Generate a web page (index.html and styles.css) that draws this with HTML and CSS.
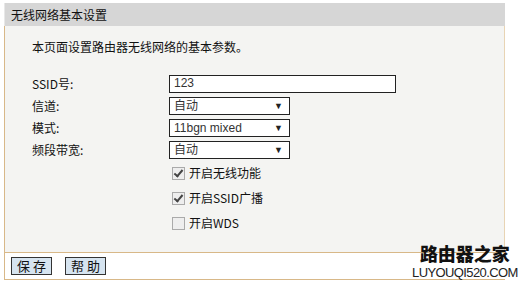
FILE: index.html
```html
<!DOCTYPE html>
<html lang="zh-CN">
<head>
<meta charset="utf-8">
<title>无线网络基本设置</title>
<link rel="stylesheet" href="styles.css">
</head>
<body>

<div class="panel">
    <div class="title">无线网络基本设置</div>

    <div class="content">
        <p class="intro">本页面设置路由器无线网络的基本参数。</p>

        <div class="rows">
            <div class="row">
                <span class="label">SSID号:</span>
                <span class="field text">123</span>
            </div>
            <div class="row">
                <span class="label">信道:</span>
                <span class="field select">自动<i>&#9660;</i></span>
            </div>
            <div class="row">
                <span class="label">模式:</span>
                <span class="field select">11bgn mixed<i>&#9660;</i></span>
            </div>
            <div class="row">
                <span class="label">频段带宽:</span>
                <span class="field select">自动<i>&#9660;</i></span>
            </div>
        </div>

        <div class="checks">
            <label class="check"><span class="box on"></span>开启无线功能</label>
            <label class="check"><span class="box on"></span>开启SSID广播</label>
            <label class="check"><span class="box"></span>开启WDS</label>
        </div>
    </div>

    <div class="foot">
        <button class="btn">保 存</button>
        <button class="btn">帮 助</button>
    </div>
</div>

<div class="mark">
    <div class="mark-cn">路由器之家</div>
    <div class="mark-en">LUYOUQI520.COM</div>
</div>

</body>
</html>
```

FILE: styles.css
```css
body {
    margin: 0;
    padding: 0;
    background: #fff;
    font: normal 12px/16px "Noto Sans CJK SC", "Liberation Sans", sans-serif;
    color: #111;
}

.panel {
    width: 501px;
    margin: 3px 0 0 4px;
}

.title {
    height: 23px;
    line-height: 23px;
    padding-left: 6px;
    background: #d6d6d6;
    border-left: 1px solid #e8e8e8;
}

.content {
    height: 226px;
    background: #f4f4f2;
    border-left: 1px solid #d8b888;
    border-right: 1px solid #e8d4b4;
    box-sizing: border-box;
    padding: 13px 0 0 27px;
}

.intro {
    margin: 0 0 18px 0;
}

.rows .row {
    display: flex;
    align-items: center;
    height: 22px;
}

.label {
    width: 137px;
}

.field {
    box-sizing: border-box;
    height: 18px;
    border: 1px solid #222;
    background: #fff;
    padding-left: 4px;
    line-height: 15px;
    font-family: "Liberation Sans", "Noto Sans CJK SC", sans-serif;
    color: #333;
}
.field.text {
    width: 227px;
}
.field.select {
    width: 121px;
    display: flex;
    justify-content: space-between;
    align-items: center;
}
.field.select i {
    font-style: normal;
    font-size: 9px;
    color: #222;
    margin-right: 6px;
}

.checks {
    margin: 4px 0 0 140px;
    display: flex;
    flex-direction: column;
    gap: 9px;
}
.check {
    display: flex;
    align-items: center;
    height: 16px;
}
.box {
    width: 11px;
    height: 11px;
    border: 1px solid #aaa;
    background: #eee;
    margin-right: 4px;
    position: relative;
}
.box.on:after {
    content: "";
    position: absolute;
    left: 3px;
    top: 0;
    width: 3px;
    height: 7px;
    border: solid #444;
    border-width: 0 2px 2px 0;
    transform: rotate(40deg);
}

.foot {
    height: 28px;
    border-top: 1px solid #d8b888;
    border-bottom: 1px solid #d8b888;
    border-left: 1px solid #d8b888;
    box-sizing: border-box;
    display: flex;
    align-items: center;
    gap: 13px;
    padding-left: 6px;
}
.btn {
    width: 41px;
    height: 18px;
    padding: 0;
    border: 1px solid #333;
    background: #d6e4f0;
    font: normal 13px/16px "Noto Sans CJK SC", sans-serif;
    color: #111;
}

.mark {
    position: absolute;
    left: 412px;
    top: 244px;
    text-align: center;
}
.mark-cn {
    font: 900 18px/18px "Noto Sans CJK SC", sans-serif;
    color: #111;
    letter-spacing: 0;
}
.mark-en {
    margin-top: 4px;
    font: normal 13px/14px "Liberation Sans", sans-serif;
    color: #222;
    letter-spacing: -0.6px;
}
```
